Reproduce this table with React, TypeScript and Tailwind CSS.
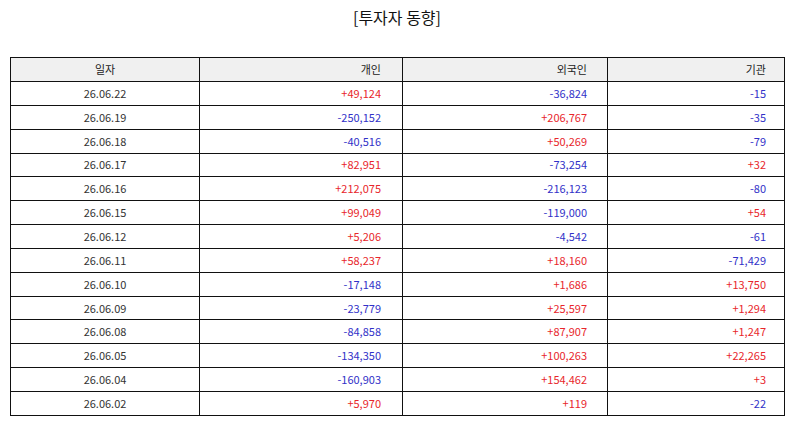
import React from "react";

type Row = [string, string, string, string];

const rows: Row[] = [
  ["26.06.22", "+49,124", "-36,824", "-15"],
  ["26.06.19", "-250,152", "+206,767", "-35"],
  ["26.06.18", "-40,516", "+50,269", "-79"],
  ["26.06.17", "+82,951", "-73,254", "+32"],
  ["26.06.16", "+212,075", "-216,123", "-80"],
  ["26.06.15", "+99,049", "-119,000", "+54"],
  ["26.06.12", "+5,206", "-4,542", "-61"],
  ["26.06.11", "+58,237", "+18,160", "-71,429"],
  ["26.06.10", "-17,148", "+1,686", "+13,750"],
  ["26.06.09", "-23,779", "+25,597", "+1,294"],
  ["26.06.08", "-84,858", "+87,907", "+1,247"],
  ["26.06.05", "-134,350", "+100,263", "+22,265"],
  ["26.06.04", "-160,903", "+154,462", "+3"],
  ["26.06.02", "+5,970", "+119", "-22"],
];

function Num({ v, pr }: { v: string; pr: string }) {
  const color = v.startsWith("+") ? "text-[#e8262b]" : "text-[#3131c8]";
  return (
    <td className={`border-[1.5px] border-[#111] text-right ${pr} ${color}`}>{v}</td>
  );
}

export default function App() {
  return (
    <div
      className="w-[794px] h-[425px] bg-white text-[#222] overflow-hidden"
      style={{ fontFamily: '"Noto Sans CJK KR", "Noto Sans", sans-serif' }}
    >
      <div className="h-[57px] pt-[5px] text-center text-[16px] leading-[24px] text-[#111]">
        [투자자 동향]
      </div>
      <div className="px-[10px]">
        <table className="w-[774px] border-collapse table-fixed text-[11px] leading-none">
          <colgroup>
            <col className="w-[189px]" />
            <col className="w-[203px]" />
            <col className="w-[205px]" />
            <col className="w-[177px]" />
          </colgroup>
          <thead>
            <tr className="h-[24px] bg-[#f0f0f0]">
              <th className="border-[1.5px] border-[#111] font-normal text-center">일자</th>
              <th className="border-[1.5px] border-[#111] font-normal text-right pr-[21px]">개인</th>
              <th className="border-[1.5px] border-[#111] font-normal text-right pr-[20px]">외국인</th>
              <th className="border-[1.5px] border-[#111] font-normal text-right pr-[18px]">기관</th>
            </tr>
          </thead>
          <tbody>
            {rows.map((r) => (
              <tr key={r[0]} className="h-[23.85px]">
                <td className="border-[1.5px] border-[#111] text-center text-[#333]">{r[0]}</td>
                <Num v={r[1]} pr="pr-[21px]" />
                <Num v={r[2]} pr="pr-[20px]" />
                <Num v={r[3]} pr="pr-[18px]" />
              </tr>
            ))}
          </tbody>
        </table>
      </div>
    </div>
  );
}
